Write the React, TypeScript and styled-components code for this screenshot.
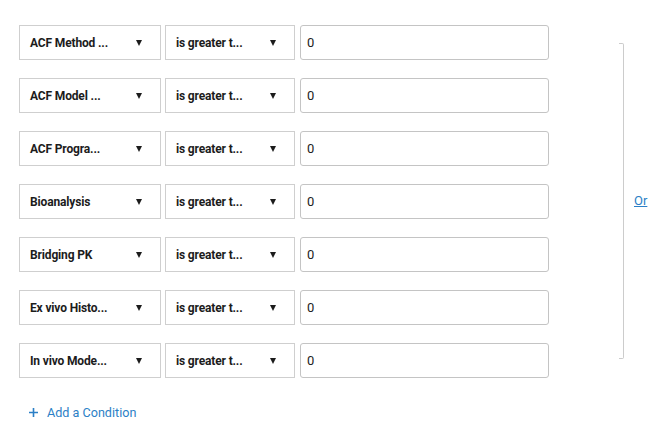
import { createGlobalStyle, styled } from 'styled-components';

const GlobalStyle = createGlobalStyle`
  body {
    margin: 0;
    background: #ffffff;
    font-family: Roboto, "Liberation Sans", Arial, sans-serif;
  }
`;

const Page = styled.div`
  display: flex;
  align-items: flex-start;
  padding: 25px 0 0 19px;
`;

const Conditions = styled.div`
  display: flex;
  flex-direction: column;
`;

const RowList = styled.div`
  display: flex;
  flex-direction: column;
  gap: 18px;
`;

const Row = styled.div`
  display: flex;
  height: 35px;
`;

const Select = styled.div<{ $width: number; $gap: number }>`
  box-sizing: border-box;
  width: ${(p) => p.$width}px;
  height: 35px;
  margin-right: ${(p) => p.$gap}px;
  border: 1px solid #cfcfcf;
  display: flex;
  align-items: center;
  justify-content: space-between;
  padding: 0 18px 0 10px;
  font-size: 12px;
  font-weight: 700;
  color: #1c1c1c;
  letter-spacing: -0.15px;
`;

const Arrow = styled.span`
  width: 0;
  height: 0;
  border-left: 3.5px solid transparent;
  border-right: 3.5px solid transparent;
  border-top: 6px solid #1c1c1c;
`;

const Input = styled.div`
  box-sizing: border-box;
  width: 249px;
  height: 35px;
  border: 1px solid #c4c4c4;
  border-radius: 3px;
  display: flex;
  align-items: center;
  padding-left: 6px;
  font-size: 13px;
  color: #222;
`;

const AddButton = styled.div`
  display: flex;
  align-items: center;
  gap: 9px;
  margin: 27px 0 0 10px;
  font-size: 12.6px;
  color: #2b7fc6;
`;

const Bracket = styled.div`
  box-sizing: border-box;
  margin: 18px 0 0 70px;
  width: 5px;
  height: 316px;
  border: 1px solid #cccccc;
  border-left: none;
  border-radius: 0 2px 2px 0;
`;

const OrLink = styled.a`
  margin: 168px 0 0 10px;
  font-size: 13px;
  color: #2b7fc6;
  text-decoration: underline;
  cursor: pointer;
`;

const rows = [
  'ACF Method ...',
  'ACF Model ...',
  'ACF Progra...',
  'Bioanalysis',
  'Bridging PK',
  'Ex vivo Histo...',
  'In vivo Mode...',
];

export default function App() {
  return (
    <>
      <GlobalStyle />
      <Page>
        <Conditions>
          <RowList>
            {rows.map((field) => (
              <Row key={field}>
                <Select $width={142} $gap={4}>
                  {field}
                  <Arrow />
                </Select>
                <Select $width={130} $gap={5}>
                  is greater t...
                  <Arrow />
                </Select>
                <Input>0</Input>
              </Row>
            ))}
          </RowList>
          <AddButton>
            <svg width="9" height="9" viewBox="0 0 9 9">
              <path d="M4.5 0v9M0 4.5h9" stroke="#2b7fc6" strokeWidth="1.6" />
            </svg>
            Add a Condition
          </AddButton>
        </Conditions>
        <Bracket />
        <OrLink>Or</OrLink>
      </Page>
    </>
  );
}
